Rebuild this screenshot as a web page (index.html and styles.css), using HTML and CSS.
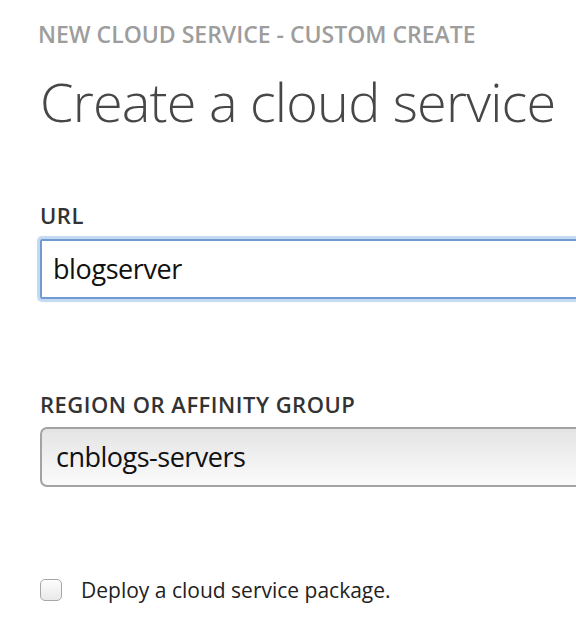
FILE: index.html
```html
<!DOCTYPE html>
<html>
<head>
<meta charset="UTF-8">
<link rel="stylesheet" href="styles.css">
</head>
<body>

<section class="wizard">
  <h2 class="crumb">NEW CLOUD SERVICE - CUSTOM CREATE</h2>
  <h1 class="title">Create a cloud service</h1>

  <div class="field">
    <label class="label">URL</label>
    <div class="textbox">blogserver</div>
  </div>

  <div class="field region">
    <label class="label">REGION OR AFFINITY GROUP</label>
    <div class="select">cnblogs-servers</div>
  </div>

  <div class="check">
    <span class="box"></span>
    <span class="check-text">Deploy a cloud service package.</span>
  </div>
</section>

</body>
</html>
```

FILE: styles.css
```css
* {
  padding: 0;
  margin: 0;
  box-sizing: border-box;
}

body {
  background: #fff;
  font-family: "Open Sans", "Noto Sans", sans-serif;
  overflow: hidden;
}

.wizard {
  padding: 19px 0 0 40px;
  width: 100%;
}

.crumb {
  font-size: 23px;
  font-weight: 600;
  color: #9d9d9d;
  line-height: 30px;
  margin-left: -2px;
  white-space: nowrap;
}

.title {
  font-size: 54px;
  font-weight: 300;
  color: #474747;
  line-height: 70px;
  margin-top: 17px;
  letter-spacing: -0.8px;
  white-space: nowrap;
}

.field {
  margin-top: 66px;
  margin-right: -20px;
}

.label {
  display: block;
  font-size: 22px;
  font-weight: 600;
  color: #333;
  line-height: 26px;
  letter-spacing: 0.5px;
}

.textbox {
  margin-top: 11px;
  height: 60px;
  border: 2px solid #6f9bd1;
  box-shadow: 0 0 1px 3px #c3d9f2;
  border-radius: 2px;
  font-size: 27px;
  color: #111;
  line-height: 56px;
  padding-left: 11px;
  letter-spacing: -0.4px;
}

.region {
  margin-top: 92px;
}

.select {
  margin-top: 10px;
  height: 60px;
  border: 2px solid #a3a3a3;
  border-radius: 7px;
  background: linear-gradient(#e4e4e4, #fbfbfb);
  font-size: 27px;
  color: #111;
  line-height: 56px;
  padding-left: 14px;
  letter-spacing: -0.5px;
}

.check {
  display: flex;
  align-items: center;
  margin-top: 89px;
}

.box {
  width: 22px;
  height: 22px;
  border: 1px solid #a6a6a6;
  border-radius: 5px;
  background: linear-gradient(#fdfdfd, #e9e9e9);
  box-shadow: inset 0 1px 1px #fff;
}

.check-text {
  margin-left: 19px;
  font-size: 21px;
  line-height: 28px;
  color: #222;
}
```
